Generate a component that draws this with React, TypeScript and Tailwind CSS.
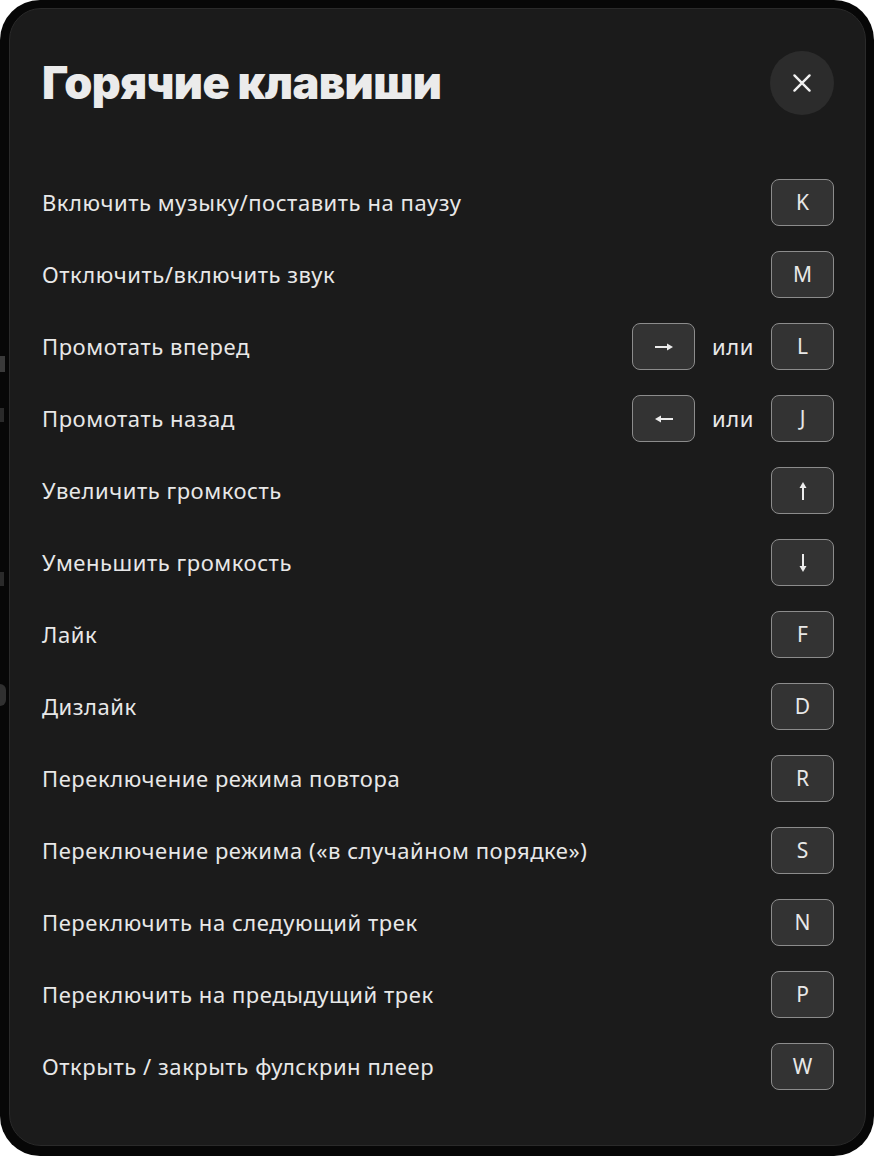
import React from "react";

type Shortcut = {
  label: string;
  keys: string[];
};

const shortcuts: Shortcut[] = [
  { label: "Включить музыку/поставить на паузу", keys: ["K"] },
  { label: "Отключить/включить звук", keys: ["M"] },
  { label: "Промотать вперед", keys: ["right", "L"] },
  { label: "Промотать назад", keys: ["left", "J"] },
  { label: "Увеличить громкость", keys: ["up"] },
  { label: "Уменьшить громкость", keys: ["down"] },
  { label: "Лайк", keys: ["F"] },
  { label: "Дизлайк", keys: ["D"] },
  { label: "Переключение режима повтора", keys: ["R"] },
  { label: "Переключение режима («в случайном порядке»)", keys: ["S"] },
  { label: "Переключить на следующий трек", keys: ["N"] },
  { label: "Переключить на предыдущий трек", keys: ["P"] },
  { label: "Открыть / закрыть фулскрин плеер", keys: ["W"] },
];

const rotation: Record<string, string> = {
  right: "",
  left: "rotate-180",
  up: "-rotate-90",
  down: "rotate-90",
};

// тонкая стрелка с треугольным наконечником, по умолчанию смотрит вправо
const Arrow: React.FC<{ dir: string }> = ({ dir }) => (
  <svg width="22" height="22" viewBox="0 0 22 22" className={rotation[dir]}>
    <path d="M2 11H15" stroke="#ececec" strokeWidth="2" />
    <path d="M14 7.5L20 11L14 14.5Z" fill="#ececec" />
  </svg>
);

const Key: React.FC<{ k: string }> = ({ k }) => (
  <span className="flex h-[47px] w-[63px] items-center justify-center rounded-[8px] border-[1.5px] border-[#8c8c8c] bg-[#333333] text-[21px] text-[#e8e8e8]">
    {k.length > 1 ? <Arrow dir={k} /> : k}
  </span>
);

const App: React.FC = () => {
  return (
    <div className="h-[1156px] w-[874px] bg-white font-['Noto_Sans',sans-serif]">
      <div className="relative h-full w-full overflow-hidden rounded-[40px] bg-[#070707] pb-[10px] pl-[9px] pr-[8px] pt-[8px]">
        {/* страница под затемнением */}
        <div className="absolute left-0 top-[356px] h-[16px] w-[5px] bg-[#3a3a3a]" />
        <div className="absolute left-0 top-[408px] h-[14px] w-[4px] bg-[#2a2a2a]" />
        <div className="absolute left-0 top-[572px] h-[14px] w-[4px] bg-[#2a2a2a]" />
        <div className="absolute left-0 top-[684px] h-[22px] w-[6px] rounded-r-full bg-[#303030]" />

        <div className="relative flex h-full flex-col rounded-[32px] border border-[#2a2a2a] bg-[#1b1b1b] pl-[32px] pr-[31px] pt-[42px]">
          <div className="flex items-center justify-between">
            <h1 className="font-['Inter',sans-serif] text-[45px] font-black leading-[64px] tracking-[-0.6px] text-[#ebebeb]">
              Горячие клавиши
            </h1>
            <button className="flex h-[64px] w-[64px] items-center justify-center rounded-full bg-[#2c2c2c]">
              <svg width="26" height="26" viewBox="0 0 24 24" fill="none" stroke="#f0f0f0" strokeWidth="2.2" strokeLinecap="round">
                <path d="M5 5L19 19M19 5L5 19" />
              </svg>
            </button>
          </div>

          <ul className="mt-[64px] flex flex-col gap-[25px]">
            {shortcuts.map((s) => (
              <li key={s.label} className="flex items-center justify-between">
                <span className="text-[22px] tracking-[0.55px] text-[#e8e8e8]">{s.label}</span>
                <div className="flex items-center gap-[17px]">
                  {s.keys.map((k, i) => (
                    <React.Fragment key={k}>
                      {i > 0 && <span className="text-[22px] tracking-[0.55px] text-[#e8e8e8]">или</span>}
                      <Key k={k} />
                    </React.Fragment>
                  ))}
                </div>
              </li>
            ))}
          </ul>
        </div>
      </div>
    </div>
  );
};

export default App;
